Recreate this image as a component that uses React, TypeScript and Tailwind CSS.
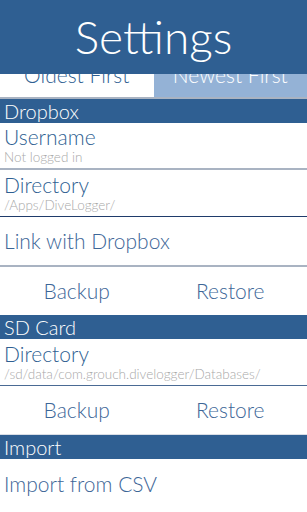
import React from "react";

const F = { fontFamily: "Lato, 'Open Sans', sans-serif" };

function SectionHeader({ title }: { title: string }) {
  return (
    <div className="h-[24px] bg-[#2f5f92] text-white text-[20px] leading-[24px] pl-[4px] font-light">
      {title}
    </div>
  );
}

function DetailRow({ title, sub, border }: { title: string; sub: string; border: string }) {
  return (
    <div className={`h-[47px] flex flex-col justify-center pl-[4px] ${border}`}>
      <div className="text-[21px] leading-[24px] text-[#2f5f92] font-light">{title}</div>
      <div className="text-[13.5px] leading-[17px] text-[#a8a8a8] font-light">{sub}</div>
    </div>
  );
}

function ButtonsRow() {
  return (
    <div className="h-[48px] flex items-center text-[21px] text-[#3d6697] font-light">
      <div className="flex-1 text-center">Backup</div>
      <div className="flex-1 text-center">Restore</div>
    </div>
  );
}

export default function App() {
  return (
    <div className="w-[307px] h-[512px] overflow-hidden bg-white" style={F}>
      <div className="h-[74px] bg-[#2f5f92] flex items-center justify-center">
        <span className="text-white text-[46px] font-light leading-none">Settings</span>
      </div>
      <div className="h-[25px] flex overflow-hidden border-b-[2px] border-[#a9b3c2]">
        <div className="flex-1 bg-white flex justify-center">
          <span className="text-[21px] leading-[24px] -mt-[11px] text-[#2f5f92] font-light">Oldest First</span>
        </div>
        <div className="flex-1 bg-[#94b2d6] flex justify-center">
          <span className="text-[21px] leading-[24px] -mt-[11px] text-white font-light">Newest First</span>
        </div>
      </div>
      <SectionHeader title="Dropbox" />
      <DetailRow title="Username" sub="Not logged in" border="border-b-[2px] border-[#a9b3c2]" />
      <DetailRow title="Directory" sub="/Apps/DiveLogger/" border="border-b-[1px] border-[#1f3b6b]" />
      <div className="h-[50px] flex items-center pl-[4px] text-[21px] text-[#3d6697] font-light border-b-[2px] border-[#a9b3c2]">
        Link with Dropbox
      </div>
      <ButtonsRow />
      <SectionHeader title="SD Card" />
      <DetailRow
        title="Directory"
        sub="/sd/data/com.grouch.divelogger/Databases/"
        border="border-b-[1px] border-[#4a6a94]"
      />
      <ButtonsRow />
      <div className="h-[1px] bg-[#d9dee6]" />
      <SectionHeader title="Import" />
      <div className="h-[50px] flex items-center pl-[4px] text-[21px] text-[#3d6697] font-light">
        Import from CSV
      </div>
    </div>
  );
}
